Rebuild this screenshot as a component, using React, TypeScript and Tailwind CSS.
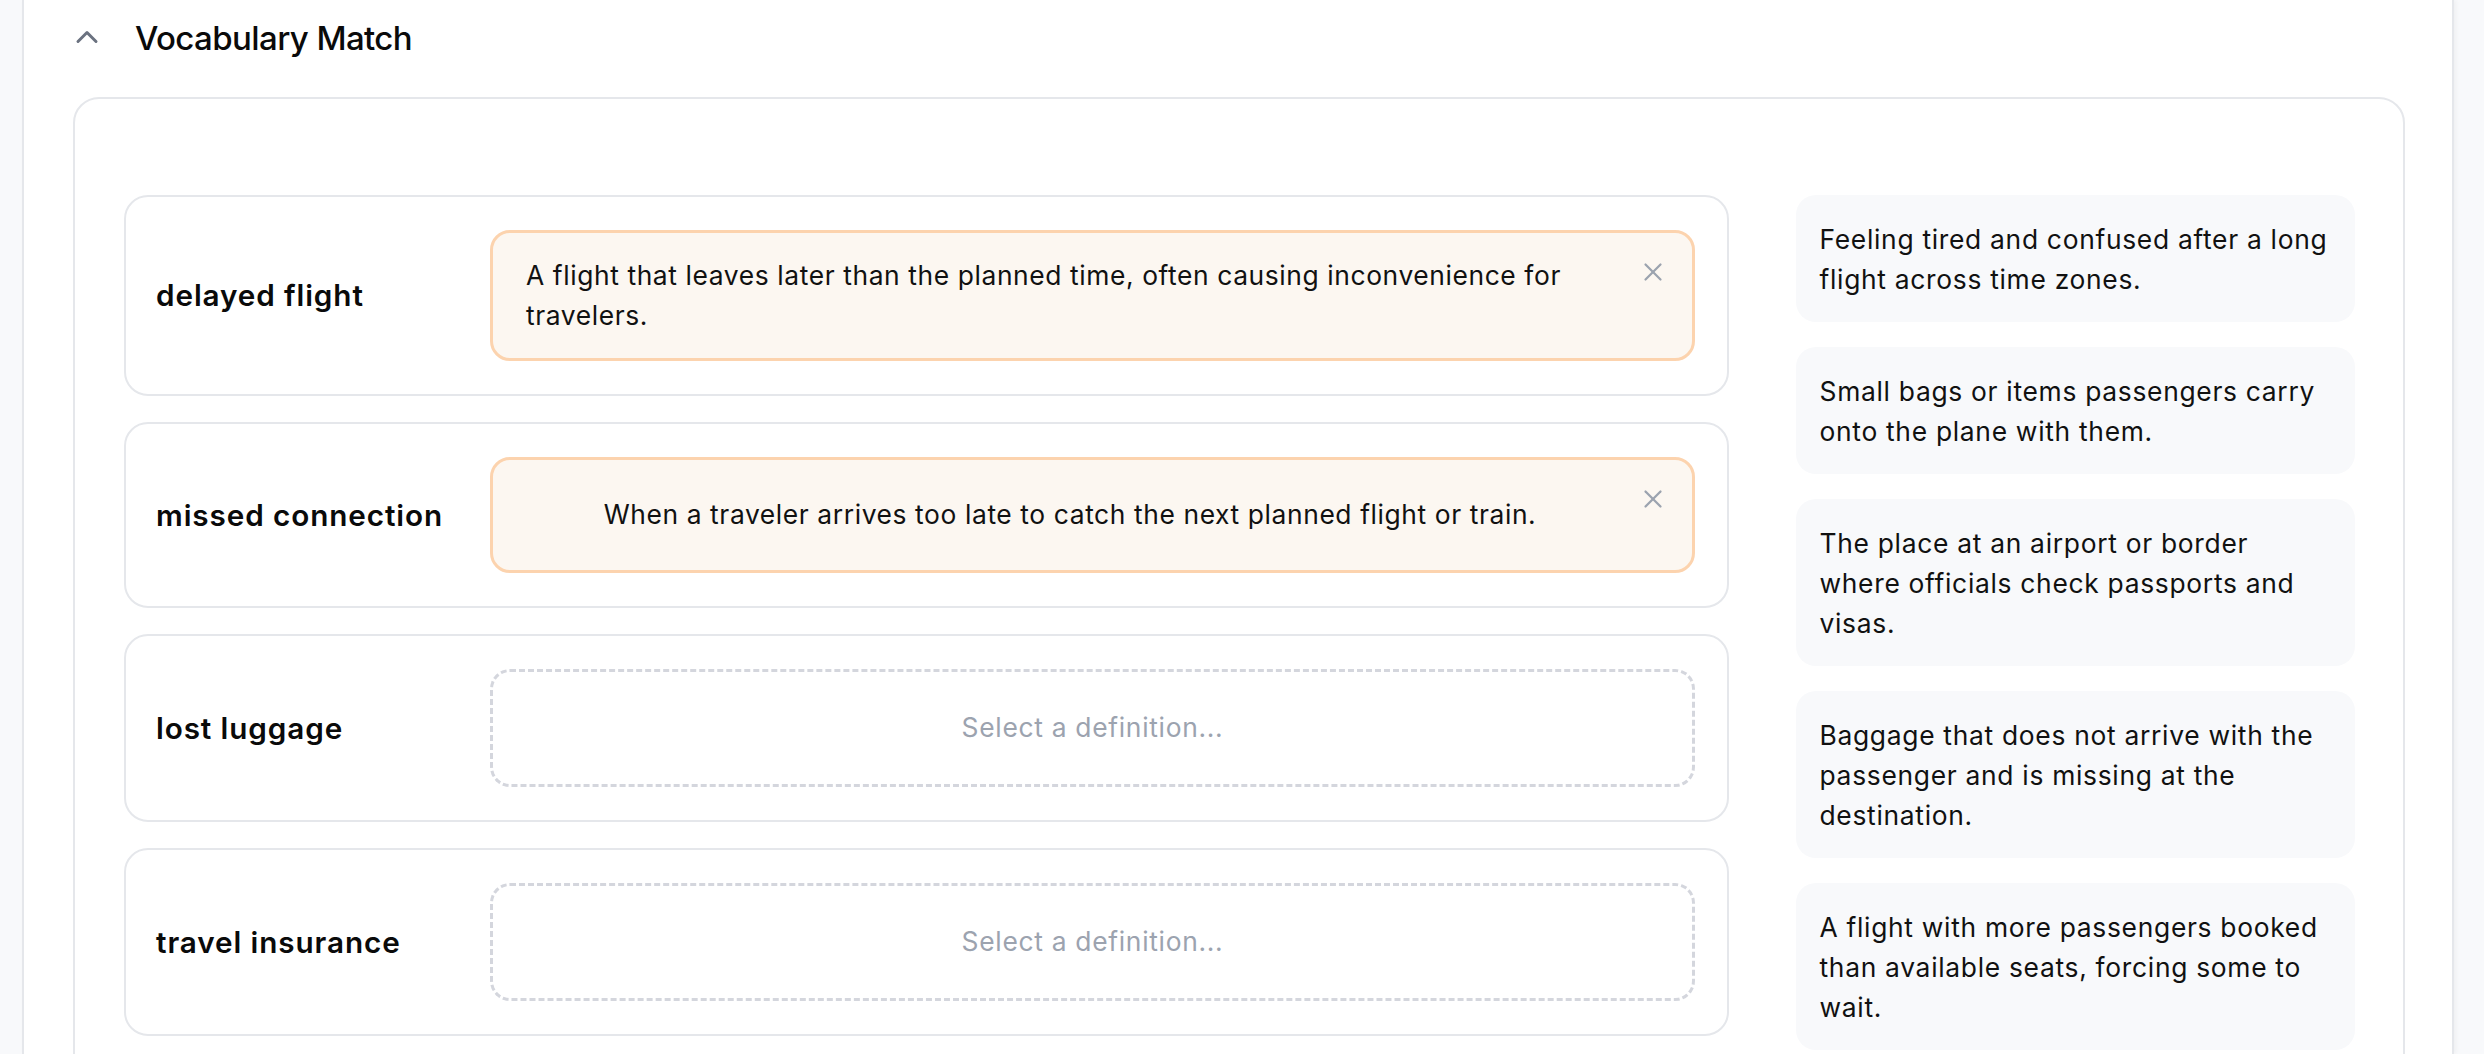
import { ChevronUp, X } from "lucide-react";

type Row = { word: string; definition?: string };

const rows: Row[] = [
  {
    word: "delayed flight",
    definition:
      "A flight that leaves later than the planned time, often causing inconvenience for travelers.",
  },
  {
    word: "missed connection",
    definition:
      "When a traveler arrives too late to catch the next planned flight or train.",
  },
  { word: "lost luggage" },
  { word: "travel insurance" },
];

const options = [
  "Feeling tired and confused after a long flight across time zones.",
  "Small bags or items passengers carry onto the plane with them.",
  "The place at an airport or border where officials check passports and visas.",
  "Baggage that does not arrive with the passenger and is missing at the destination.",
  "A flight with more passengers booked than available seats, forcing some to wait.",
];

const DropZone = ({ definition }: { definition?: string }) => {
  if (!definition) {
    return (
      <div className="flex-1 min-h-[118px] flex items-center justify-center rounded-[20px] border-[3px] border-dashed border-[#d4d6dd] text-[26.4px] tracking-[0.7px] text-[#9ca3af]">
        Select a definition...
      </div>
    );
  }

  return (
    <div className="relative flex-1 min-h-[116px] flex items-center justify-center rounded-[20px] border-[3px] border-[#fcd3ae] bg-[#fcf7f1] pl-[33px] pr-[78px] py-[23px]">
      <p className="text-[26.4px] leading-[39.6px] tracking-[0.6px] text-[#111]">{definition}</p>
      <button className="absolute top-[24px] right-[24px] text-[#9ca3af]">
        <X className="w-[30px] h-[30px]" strokeWidth={1.8} />
      </button>
    </div>
  );
};

export default function App() {
  return (
    <div className="h-[1054px] overflow-hidden bg-[#f8f9fb] pl-[22px] pr-[30px] font-['Inter',sans-serif]">
      <div className="h-full bg-white border-l-2 border-r-2 border-[#e5e7eb] shadow-[2px_0_4px_rgba(0,0,0,0.04)] pl-[49px] pr-[47px]">
        {/* Header */}
        <div className="flex items-center h-[78px] gap-[30px] -ml-[4px]">
          <ChevronUp className="w-[36px] h-[36px] text-[#6b7280] -mt-[4px]" strokeWidth={2} />
          <h2 className="text-[33px] font-medium tracking-[-0.6px] text-[#0a0a0a]">Vocabulary Match</h2>
        </div>

        {/* Exercise card */}
        <div className="mt-[19px] rounded-[26px] border-2 border-[#e5e7eb] pt-[96px] pl-[49px] pr-[48px] pb-[40px]">
          <div className="flex gap-[67px] items-start">
            <div className="flex-1 flex flex-col gap-[26px]">
              {rows.map((row) => (
                <div
                  key={row.word}
                  className="flex items-center rounded-[24px] border-2 border-[#e5e7eb] pl-[30px] pr-[32px] py-[33px]"
                >
                  <div className="w-[334px] shrink-0 text-[29.7px] font-semibold tracking-[0.9px] text-[#0a0a0a]">
                    {row.word}
                  </div>
                  <DropZone definition={row.definition} />
                </div>
              ))}
            </div>

            <div className="w-[559px] shrink-0 flex flex-col gap-[25px]">
              {options.map((text) => (
                <div
                  key={text}
                  className="rounded-[20px] bg-[#f8f9fb] p-[23.5px] text-[26.4px] leading-[40px] tracking-[0.7px] text-[#111]"
                >
                  {text}
                </div>
              ))}
            </div>
          </div>
        </div>
      </div>
    </div>
  );
}
